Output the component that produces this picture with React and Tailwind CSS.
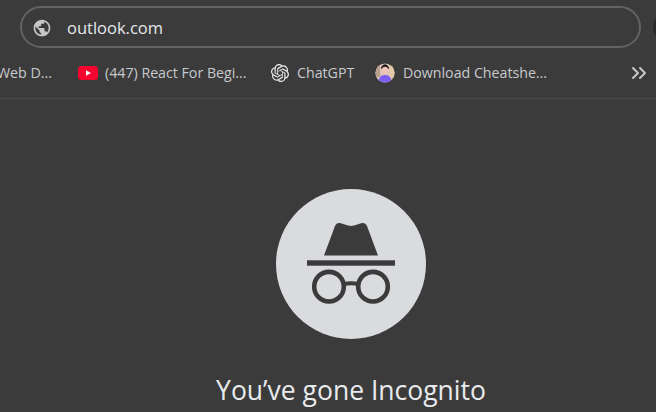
import React from "react";
import { MdPublic } from "react-icons/md";
import { SiOpenai } from "react-icons/si";
import { ChevronsRight } from "lucide-react";

function YoutubeIcon() {
  return (
    <svg width="20" height="14" viewBox="0 0 20 14" className="shrink-0">
      <rect width="20" height="14" rx="3.5" fill="#f4052f" />
      <path d="M8 4.2 L13 7 L8 9.8 Z" fill="#fff" />
    </svg>
  );
}

function AvatarIcon() {
  return (
    <svg width="20" height="20" viewBox="0 0 20 20" className="shrink-0">
      <defs>
        <clipPath id="avatar-clip">
          <circle cx="10" cy="10" r="9.6" />
        </clipPath>
      </defs>
      <g clipPath="url(#avatar-clip)">
        <rect width="20" height="20" fill="#dcc4b4" />
        <rect x="0" y="0" width="5" height="14" fill="#b9a08f" />
        <rect x="15" y="0" width="5" height="14" fill="#e6c8a4" />
        <path d="M6 4.5 Q10 -2 14 4.5 L13.6 6 Q10 3.6 6.4 6 Z" fill="#1c1518" />
        <ellipse cx="10" cy="7.6" rx="3.2" ry="3.8" fill="#f0c4b6" />
        <path d="M3 20 Q4 11.5 10 12 Q16 11.5 17 20 Z" fill="#7f5ff0" />
      </g>
    </svg>
  );
}

function IncognitoBadge() {
  return (
    <div className="flex h-[150px] w-[150px] items-center justify-center rounded-full bg-[#dadbde]">
      <svg width="150" height="150" viewBox="0 0 150 150">
        <path
          d="M48 66.5 L59 37 Q60.5 33.5 64 34 L72 36.6 Q75 37.4 78 36.6 L86 34 Q89.5 33.5 91 37 L102 66.5 Z"
          fill="#3b3b3b"
        />
        <rect x="31" y="71.3" width="88" height="5.4" fill="#3b3b3b" />
        <circle cx="53" cy="97.7" r="14.8" fill="none" stroke="#3b3b3b" strokeWidth="4.6" />
        <circle cx="97" cy="97.7" r="14.8" fill="none" stroke="#3b3b3b" strokeWidth="4.6" />
        <path d="M67 95.5 Q75 93 83 95.5" fill="none" stroke="#3b3b3b" strokeWidth="4" />
      </svg>
    </div>
  );
}

export default function App() {
  return (
    <div className="flex h-[412px] w-[656px] flex-col overflow-hidden bg-[#3b3b3b] font-['Open_Sans','Noto_Sans',sans-serif] text-[#dfe1e5]">
      {/* Address bar */}
      <div className="flex items-center pl-5 pt-1.5">
        <div className="flex h-[42px] w-[621px] shrink-0 items-center rounded-full border-2 border-[#636363] pl-[10px] pt-0.5">
          <MdPublic className="shrink-0 text-[#c7c7c7]" size={20} />
          <span className="ml-[15px] text-[16.5px] leading-none text-[#e6e8ec]">outlook.com</span>
        </div>
        <div className="ml-3 h-8 w-8 shrink-0 rounded-full bg-[#2a2a2a]" />
      </div>

      {/* Bookmarks */}
      <div className="mt-[11px] flex h-[28px] items-center whitespace-nowrap text-[14.2px] text-[#c6cace]">
        <span className="ml-[-3px] w-[81px] shrink-0">Web D...</span>
        <YoutubeIcon />
        <span className="ml-[7px] w-[166px] shrink-0">(447) React For Begi...</span>
        <SiOpenai className="shrink-0 text-[#eeeeee]" size={18} />
        <span className="ml-2 w-[78px] shrink-0">ChatGPT</span>
        <AvatarIcon />
        <span className="ml-2 w-[224px] shrink-0">Download Cheatshe...</span>
        <ChevronsRight className="shrink-0 text-[#c7c7c7]" size={24} strokeWidth={2} />
      </div>

      <div className="mt-[11px] h-px bg-[#494949]" />

      {/* New tab content */}
      <div className="flex flex-col items-center pl-[46px] pt-[90px]">
        <IncognitoBadge />
        <h1 className="mt-[33px] text-[26.5px] font-normal leading-[36px] text-[#e8eaed]">You’ve gone Incognito</h1>
      </div>
    </div>
  );
}
